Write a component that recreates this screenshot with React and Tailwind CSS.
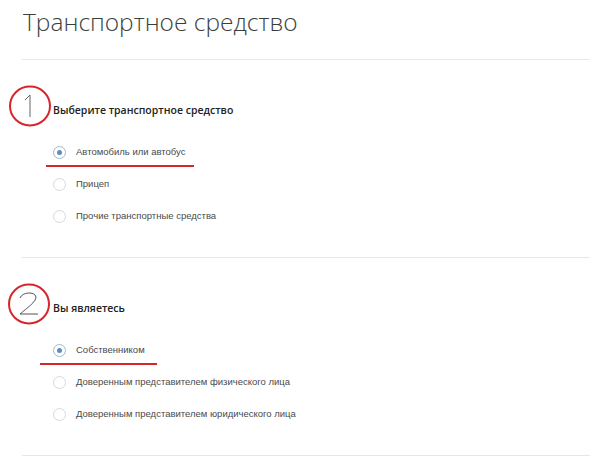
import React, { useState } from 'react';

const VEHICLES = ['Автомобиль или автобус', 'Прицеп', 'Прочие транспортные средства'];
const OWNERS = [
  'Собственником',
  'Доверенным представителем физического лица',
  'Доверенным представителем юридического лица',
];

function Radio({ label, checked, onChange }) {
  return (
    <label className="flex items-center h-[32px] cursor-pointer">
      <span
        onClick={onChange}
        className={`flex items-center justify-center w-[13px] h-[13px] rounded-full border ${
          checked ? 'border-[#9cb9d3]' : 'border-[#d8d8d8]'
        } bg-white`}
      >
        {checked && <span className="w-[5px] h-[5px] rounded-full bg-[#5b8fc0]" />}
      </span>
      <span className="ml-[10px] text-[9.5px] text-[#4a4a4a] font-['Liberation_Sans',Arial,sans-serif]">{label}</span>
    </label>
  );
}

// red hand-drawn annotation: ring with a number in it
function Marker({ num, cx, cy }) {
  return (
    <svg
      className="absolute pointer-events-none"
      width="60"
      height="60"
      viewBox="0 0 60 60"
      style={{ left: cx - 30, top: cy - 30 }}
    >
      <ellipse cx="30" cy="30" rx="20" ry="19.5" fill="none" stroke="#d7262b" strokeWidth="2" />
      {num === 1 ? (
        <path d="M25 24 L30 19 L30 41" fill="none" stroke="#666" strokeWidth="1" />
      ) : (
        <path d="M21 24 C23 18 36 17 37 23 C37 28 28 34 21 40 L39 40" fill="none" stroke="#555" strokeWidth="1" />
      )}
    </svg>
  );
}

function Section({ title, options, value, setValue, line }) {
  return (
    <div className="pt-[42px] pb-[25px] border-b border-[#e6e6e6]">
      <div className="pl-[31px] h-[18px] flex items-center text-[10.5px] font-semibold text-[#222]">{title}</div>
      <div className="mt-[16px] pl-[31px]">
        {options.map((o, i) => (
          <div key={o} className="relative">
            <Radio label={o} checked={value === i} onChange={() => setValue(i)} />
            {value === i && (
              <div
                className="absolute top-[29px] h-[2px] bg-[#d7262b]"
                style={{ left: line[0], width: line[1] }}
              />
            )}
          </div>
        ))}
      </div>
    </div>
  );
}

export default function App() {
  const [vehicle, setVehicle] = useState(0);
  const [owner, setOwner] = useState(0);

  return (
    <div className="relative w-[600px] h-[463px] bg-white overflow-hidden font-['Open_Sans',sans-serif]">
      <div className="ml-[22px] mr-[10px]">
        <div className="h-[60px] border-b border-[#e8e8e8] pt-[2px]">
          <h1 className="text-[24.5px] font-light text-[#3b3f3c] leading-[40px] pl-[1px]">Транспортное средство</h1>
        </div>
        <Section
          title="Выберите транспортное средство"
          options={VEHICLES}
          value={vehicle}
          setValue={setVehicle}
          line={[-7, 148]}
        />
        <Section
          title="Вы являетесь"
          options={OWNERS}
          value={owner}
          setValue={setOwner}
          line={[-13, 117]}
        />
      </div>
      <Marker num={1} cx={30} cy={106} />
      <Marker num={2} cx={29} cy={304} />
    </div>
  );
}
